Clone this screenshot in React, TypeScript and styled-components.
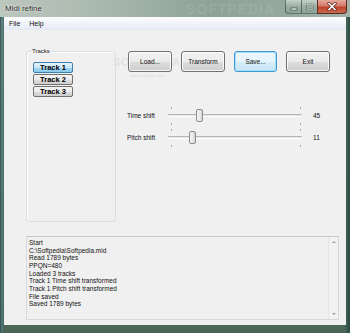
import React from "react";
import styled, { createGlobalStyle, css } from "styled-components";

const Global = createGlobalStyle`
  html, body { margin: 0; padding: 0; background: #6f8a7c; }
  body { font-family: "Liberation Sans", Arial, sans-serif; }
  * { box-sizing: border-box; }
`;

const Window = styled.div`
  position: relative;
  width: 350px;
  height: 333px;
  display: flex;
  flex-direction: column;
  padding: 0 4px 8px 4px;
  background:
    linear-gradient(90deg, rgba(40,70,55,0.9) 0px, rgba(90,130,150,0.8) 2px, rgba(60,95,75,0.9) 4px, transparent 5px, transparent 345px, rgba(60,95,80,0.9) 346px, rgba(40,70,60,0.95) 350px),
    linear-gradient(180deg, #b2bfb6 0px, #9aaca2 17px, #7d9486 120px, #587463 300px, #4a6455 333px);
  overflow: hidden;
`;

const TitleBar = styled.div`
  position: relative;
  height: 17px;
  margin: 0 -4px;
  padding: 0 0 0 5px;
  display: flex;
  align-items: center;
  background: linear-gradient(90deg, #bcc7be 0%, #a9b8ae 30%, #8ea297 60%, #98aaa0 85%, #a4b3aa 100%);
`;

const Title = styled.span`
  font-size: 8px;
  color: #1c1c1c;
  text-shadow: 0 0 3px rgba(255,255,255,0.9), 0 0 1px rgba(255,255,255,0.9);
  line-height: 17px;
`;

const TitleMark = styled.span`
  position: absolute;
  left: 186px;
  top: 1px;
  font-size: 14px;
  font-weight: bold;
  letter-spacing: 1px;
  color: rgba(200, 220, 210, 0.18);
`;

const Controls = styled.div`
  position: absolute;
  right: 3px;
  top: 0;
  display: flex;
`;

const CtlBtn = styled.div<{ $close?: boolean }>`
  width: ${(p) => (p.$close ? 30 : 16)}px;
  height: 14px;
  display: flex;
  align-items: center;
  justify-content: center;
  border: 1px solid rgba(60, 80, 70, 0.7);
  border-top: none;
  background: linear-gradient(180deg, rgba(230,240,235,0.55), rgba(160,180,170,0.35) 50%, rgba(120,145,130,0.35));
  ${(p) =>
    p.$close
      ? css`
          border-color: #5a2a22;
          border-radius: 0 0 4px 0;
          background: linear-gradient(180deg, #e6aa9e 0%, #d27a68 45%, #c1432e 55%, #c96a4e 100%);
        `
      : css`
          &:first-child { border-radius: 0 0 0 4px; }
          border-right: none;
        `}
`;

const Client = styled.div`
  flex: 1;
  display: flex;
  flex-direction: column;
  background: #f0f0f0;
  position: relative;
`;

const MenuBar = styled.div`
  height: 13px;
  display: flex;
  align-items: center;
  padding-left: 5px;
  gap: 9px;
  background: linear-gradient(180deg, #fbfcfe 0%, #eef2f8 60%, #e3e9f3 100%);
`;

const MenuItem = styled.span`
  font-size: 7px;
  color: #111;
`;

const Content = styled.div`
  flex: 1;
  display: flex;
  flex-direction: column;
  padding: 21px 7px 5px 22px;
`;

const TopSection = styled.div`
  display: flex;
  height: 171px;
`;

const GroupBox = styled.div`
  position: relative;
  width: 90px;
  height: 171px;
  border: 1px solid #d5dfe5;
  border-radius: 3px;
  box-shadow: inset 1px 1px 0 #fff;
  padding: 10px 0 0 6px;
  display: flex;
  flex-direction: column;
  gap: 1px;
`;

const GroupLabel = styled.span`
  position: absolute;
  left: 4px;
  top: -4px;
  padding: 0 1px;
  font-size: 6px;
  line-height: 7px;
  color: #222;
  background: #f0f0f0;
`;

const TrackButton = styled.div<{ $active?: boolean }>`
  width: 40px;
  height: 11px;
  display: flex;
  align-items: center;
  justify-content: center;
  font-size: 7.5px;
  font-weight: bold;
  color: #000;
  border: 1px solid #707070;
  border-radius: 2px;
  background: linear-gradient(180deg, #f3f3f3 0%, #ebebeb 50%, #dddddd 51%, #cfcfcf 100%);
  ${(p) =>
    p.$active &&
    css`
      border-color: #3c7fb1;
      background: linear-gradient(180deg, #e3f3fb 0%, #c9e8f8 50%, #a6d8f2 51%, #88c9ec 100%);
    `}
`;

const RightColumn = styled.div`
  position: relative;
  margin-left: 12px;
  display: flex;
  flex-direction: column;
`;

const Watermark = styled.div`
  position: absolute;
  left: -15px;
  top: 6px;
  font-size: 11px;
  font-weight: bold;
  letter-spacing: 0.5px;
  color: #e2e2e2;
  line-height: 11px;
`;

const WatermarkSmall = styled.div`
  position: absolute;
  left: 2px;
  top: 22px;
  font-size: 4px;
  color: #dadada;
`;

const ButtonRow = styled.div`
  position: relative;
  display: flex;
  gap: 9px;
`;

const PushButton = styled.div<{ $default?: boolean }>`
  width: 44px;
  height: 21px;
  display: flex;
  align-items: center;
  justify-content: center;
  font-size: 6.5px;
  color: #111;
  border: 1px solid #707070;
  border-radius: 3px;
  box-shadow: inset 0 0 0 1px rgba(255,255,255,0.8);
  background: linear-gradient(180deg, #f2f2f2 0%, #ebebeb 50%, #dddddd 51%, #cfcfcf 100%);
  ${(p) =>
    p.$default &&
    css`
      width: 43px;
      border-color: #3c9ad8;
      box-shadow: inset 0 0 0 1px #a8ddf7;
      background: linear-gradient(180deg, #eef8fd 0%, #e4f3fb 50%, #d4ecf8 51%, #c8e6f7 100%);
    `}
`;

const Sliders = styled.div`
  margin-top: 32px;
  margin-left: -1px;
  display: flex;
  flex-direction: column;
`;

const SliderRow = styled.div`
  display: grid;
  grid-template-columns: 41px 134px auto;
  align-items: center;
  height: 22px;
`;

const SliderLabel = styled.span`
  font-size: 6.5px;
  color: #111;
`;

const SliderTrack = styled.div`
  position: relative;
  height: 22px;
`;

const TrackLine = styled.div`
  position: absolute;
  left: 0;
  right: 0;
  top: 10px;
  height: 3px;
  border-top: 1px solid #b5b5b5;
  border-bottom: 1px solid #ffffff;
  background: #e4e4e4;
  border-radius: 1px;
`;

const Tick = styled.div<{ $x: number; $bottom?: boolean }>`
  position: absolute;
  left: ${(p) => p.$x}px;
  top: ${(p) => (p.$bottom ? 19 : 3)}px;
  width: 1px;
  height: 2px;
  background: #a8a8a8;
`;

const Thumb = styled.div<{ $x: number }>`
  position: absolute;
  left: ${(p) => p.$x}px;
  top: 5px;
  width: 7px;
  height: 13px;
  border: 1px solid #8c8c8c;
  border-radius: 2px;
  background: linear-gradient(90deg, #f7f7f7 0%, #e9e9e9 50%, #d6d6d6 100%);
`;

const SliderValue = styled.span`
  margin-left: 11px;
  font-size: 6.5px;
  color: #111;
`;

const LogBox = styled.div`
  position: relative;
  margin-top: 14px;
  height: 84px;
  width: 313px;
  border: 1px solid #d5d9dd;
  border-top-color: #c3cad2;
  background: #f0f0f0;
  display: flex;
`;

const LogText = styled.div`
  flex: 1;
  padding: 2px 0 0 2px;
  font-size: 6.5px;
  line-height: 7.67px;
  color: #111;
`;

const ScrollBar = styled.div`
  width: 10px;
  display: flex;
  flex-direction: column;
  justify-content: space-between;
  align-items: center;
  padding: 4px 0;
  border-left: 1px solid #e6e6e6;
  background: #f2f2f2;
`;

const Arrow = styled.div<{ $down?: boolean }>`
  width: 0;
  height: 0;
  border-left: 2px solid transparent;
  border-right: 2px solid transparent;
  ${(p) =>
    p.$down
      ? css`border-top: 2px solid #a0a0a0;`
      : css`border-bottom: 2px solid #a0a0a0;`}
`;

const CloseGlyph = () => (
  <svg width="10" height="9" viewBox="0 0 10 9">
    <path d="M2 1.5 L8 7.5 M8 1.5 L2 7.5" stroke="#4a1a12" strokeWidth="3" strokeLinecap="square" />
    <path d="M2 1.5 L8 7.5 M8 1.5 L2 7.5" stroke="#fff" strokeWidth="1.6" strokeLinecap="square" />
  </svg>
);

const MinGlyph = () => (
  <svg width="8" height="8" viewBox="0 0 8 8">
    <rect x="1" y="5" width="6" height="2" fill="#fff" stroke="#3a4a42" strokeWidth="0.7" />
  </svg>
);

const MaxGlyph = () => (
  <svg width="8" height="8" viewBox="0 0 8 8">
    <rect x="1.2" y="1.5" width="5.6" height="5" fill="none" stroke="#3a4a42" strokeWidth="1.4" />
    <rect x="1.2" y="1.5" width="5.6" height="5" fill="none" stroke="#fff" strokeWidth="0.6" />
  </svg>
);

const logLines = [
  "Start",
  "C:\\Softpedia\\Softpedia.mid",
  "Read 1789 bytes",
  "PPQN=480",
  "Loaded 3 tracks",
  "Track 1 Time shift transformed",
  "Track 1 Pitch shift transformed",
  "File saved",
  "Saved 1789 bytes",
];

const sliders = [
  { label: "Time shift", value: 45, thumb: 28 },
  { label: "Pitch shift", value: 11, thumb: 21 },
];

export default function App() {
  return (
    <>
      <Global />
      <Window>
        <TitleBar>
          <Title>Midi refine</Title>
          <TitleMark>SOFTPEDIA</TitleMark>
          <Controls>
            <CtlBtn><MinGlyph /></CtlBtn>
            <CtlBtn><MaxGlyph /></CtlBtn>
            <CtlBtn $close><CloseGlyph /></CtlBtn>
          </Controls>
        </TitleBar>
        <Client>
          <MenuBar>
            <MenuItem>File</MenuItem>
            <MenuItem>Help</MenuItem>
          </MenuBar>
          <Content>
            <TopSection>
              <GroupBox>
                <GroupLabel>Tracks</GroupLabel>
                <TrackButton $active>Track 1</TrackButton>
                <TrackButton>Track 2</TrackButton>
                <TrackButton>Track 3</TrackButton>
              </GroupBox>
              <RightColumn>
                <Watermark>SOFTPEDIA</Watermark>
                <WatermarkSmall>www.softpedia.com</WatermarkSmall>
                <ButtonRow>
                  <PushButton>Load...</PushButton>
                  <PushButton>Transform</PushButton>
                  <PushButton $default>Save...</PushButton>
                  <PushButton>Exit</PushButton>
                </ButtonRow>
                <Sliders>
                  {sliders.map((s) => (
                    <SliderRow key={s.label}>
                      <SliderLabel>{s.label}</SliderLabel>
                      <SliderTrack>
                        <TrackLine />
                        <Tick $x={3} />
                        <Tick $x={132} />
                        <Tick $x={3} $bottom />
                        <Tick $x={132} $bottom />
                        <Thumb $x={s.thumb} />
                      </SliderTrack>
                      <SliderValue>{s.value}</SliderValue>
                    </SliderRow>
                  ))}
                </Sliders>
              </RightColumn>
            </TopSection>
            <LogBox>
              <LogText>
                {logLines.map((l, i) => (
                  <div key={i}>{l}</div>
                ))}
              </LogText>
              <ScrollBar>
                <Arrow />
                <Arrow $down />
              </ScrollBar>
            </LogBox>
          </Content>
        </Client>
      </Window>
    </>
  );
}
